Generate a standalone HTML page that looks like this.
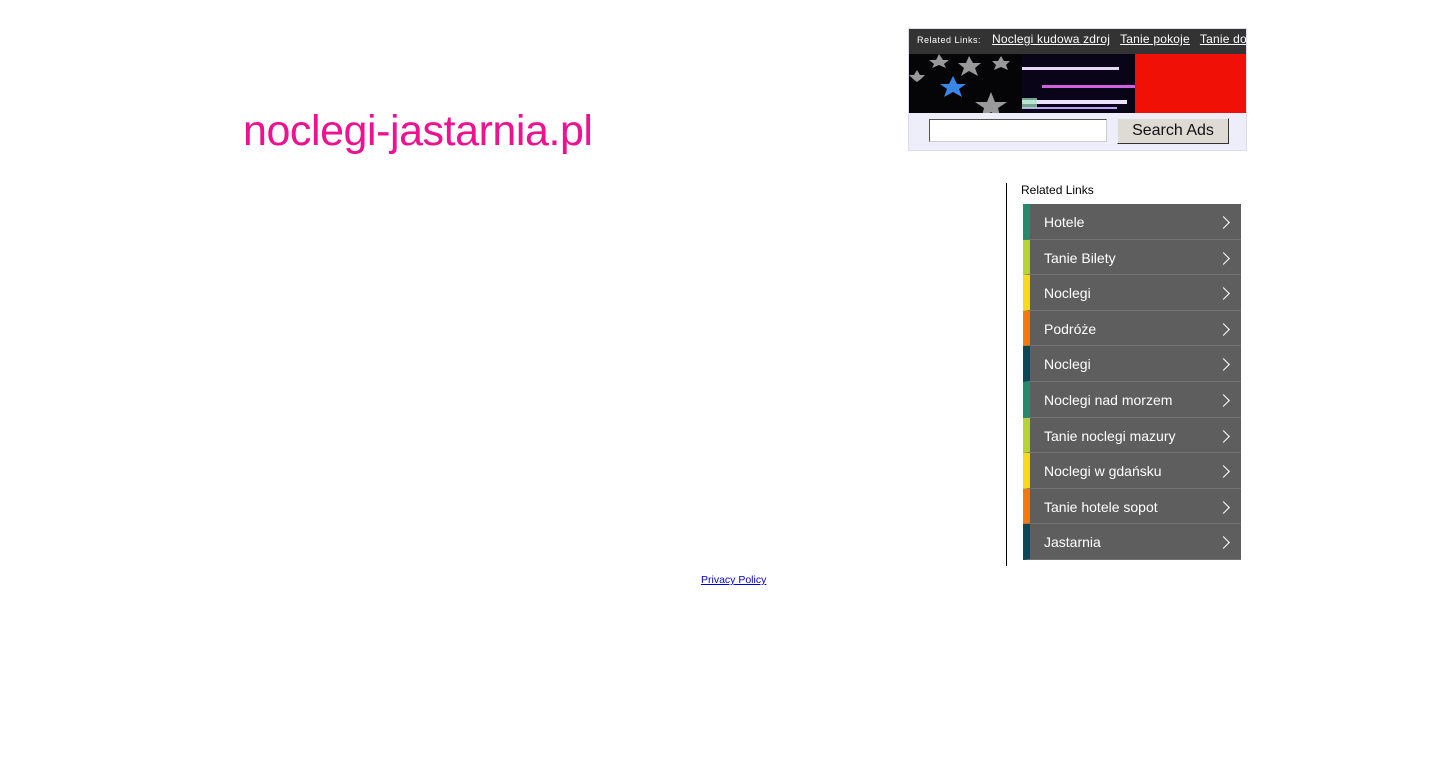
<!DOCTYPE html>
<html><head><meta charset="utf-8"><style>
body{margin:0;background:#fff;font-family:"Liberation Sans",sans-serif;}
.logo{position:absolute;left:243px;top:107px;font-size:43px;color:#ee1190;letter-spacing:-0.45px}
.ad{position:absolute;left:908px;top:28px;width:339px;height:123px;background:#eeeefa;overflow:hidden;box-sizing:border-box;border:1px solid #dcdcf0}
.bar{position:absolute;left:0;top:0;width:339px;height:25px;background:#333;white-space:nowrap;color:#fff;font-size:12px;line-height:21px;letter-spacing:0.2px}
.bar b{font-weight:normal;font-size:9px;letter-spacing:0.5px;margin:0 11px 0 8px}
.bar u{margin-right:10px}
.img1{position:absolute;left:0;top:25px;width:113px;height:59px;background:#050508}
.img2{position:absolute;left:113px;top:25px;width:113px;height:59px;background:#0a0418}
.img3{position:absolute;left:226px;top:25px;width:113px;height:59px;background:#f01005}
.inp{position:absolute;left:20px;top:90px;width:178px;height:23px;background:#fff;border:1px solid #555;border-right-color:#ccc;border-bottom-color:#ccc;box-sizing:border-box}
.btn{position:absolute;left:208px;top:89px;width:112px;height:26px;background:#dedad4;border:1px solid #333;border-top-color:#eee;border-left-color:#eee;box-sizing:border-box;font-size:16px;text-align:center;line-height:24px;color:#111}
.vl{position:absolute;left:1006px;top:183px;width:1px;height:383px;background:#000}
.rl{position:absolute;left:1021px;top:183px;font-size:12px;color:#000}
.list{position:absolute;left:1023px;top:204px;width:218px}
.row{height:35.6px;box-sizing:border-box;background:#5e5e5e;border-bottom:1px solid #737373;border-left:7px solid;color:#fff;font-size:14px;line-height:36px;padding-left:14px;position:relative}
.row:after{content:"";position:absolute;right:13px;top:14px;width:8px;height:8px;border-top:1.5px solid #fff;border-right:1.5px solid #fff;transform:rotate(45deg)}
.pp{position:absolute;left:701px;top:574px;font-size:10.5px;color:#00c;text-decoration:underline}
</style></head><body>
<div class="logo">noclegi-jastarnia.pl</div>
<div class="ad">
<div class="bar"><b>Related Links:</b><u>Noclegi kudowa zdroj</u><u>Tanie pokoje</u><u>Tanie domki</u></div>
<div class="img1"><svg width="113" height="59"><g fill="#999"><polygon points="60,2 64,9 72,9 66,14 69,22 60,17 52,22 55,14 49,9 57,9"/><polygon points="82,38 86,48 98,48 89,54 92,66 82,58 72,66 75,54 66,48 78,48"/><polygon points="30,0 34,6 40,6 35,10 37,14 30,11 23,14 25,10 20,6 27,6"/><polygon points="92,2 95,7 101,7 97,11 99,16 92,13 85,16 87,11 83,7 89,7"/><polygon points="8,16 11,21 16,21 12,25 8,28 4,25 0,21 5,21"/></g><polygon points="44,22 48,30 57,30 50,35 53,43 44,38 35,43 38,35 31,30 40,30" fill="#3a86e8"/></svg></div>
<div class="img2"><svg width="113" height="59"><rect x="0" y="13" width="97" height="3" fill="#e8d8f8"/><rect x="20" y="31" width="93" height="3" fill="#d060e0"/><rect x="0" y="46" width="105" height="4" fill="#f0e0ff"/><rect x="0" y="53" width="95" height="2" fill="#c0a0ff"/><rect x="0" y="44" width="15" height="10" fill="#a0e8c0" opacity=".7"/></svg></div>
<div class="img3"></div>
<div class="inp"></div>
<div class="btn">Search Ads</div>
</div>
<div class="vl"></div>
<div class="rl">Related Links</div>
<div class="list">
<div class="row" style="border-left-color:#248a6e">Hotele</div>
<div class="row" style="border-left-color:#b6d335">Tanie Bilety</div>
<div class="row" style="border-left-color:#f6da1b">Noclegi</div>
<div class="row" style="border-left-color:#f5780d">Podróże</div>
<div class="row" style="border-left-color:#0d4656">Noclegi</div>
<div class="row" style="border-left-color:#248a6e">Noclegi nad morzem</div>
<div class="row" style="border-left-color:#b6d335">Tanie noclegi mazury</div>
<div class="row" style="border-left-color:#f6da1b">Noclegi w gdańsku</div>
<div class="row" style="border-left-color:#f5780d">Tanie hotele sopot</div>
<div class="row" style="border-left-color:#0d4656">Jastarnia</div>
</div>
<div class="pp">Privacy Policy</div>
</body></html>
